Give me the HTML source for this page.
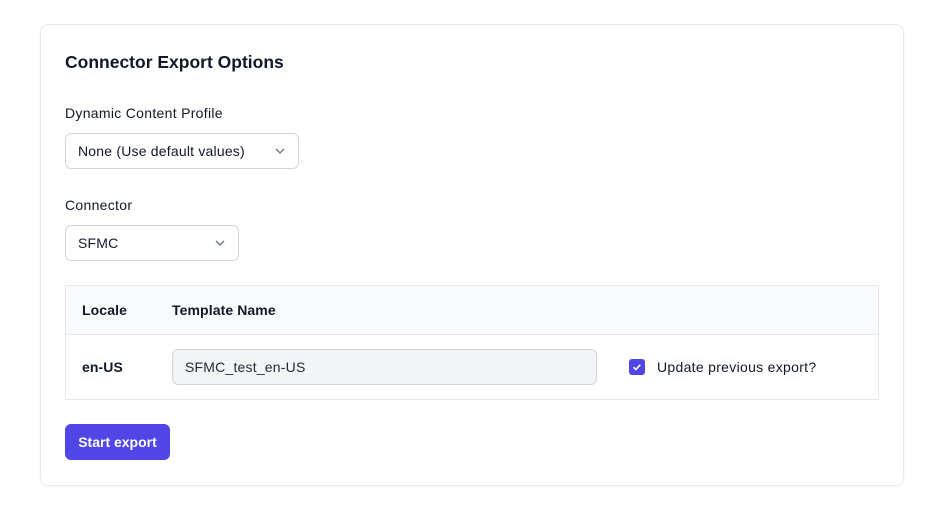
<!DOCTYPE html>
<html><head><meta charset="utf-8"><style>
*{box-sizing:border-box;margin:0;padding:0}
body{width:936px;height:523px;background:#fff;font-family:"Liberation Sans",sans-serif;color:#111827;position:relative;overflow:hidden}
.card{position:absolute;left:40px;top:24px;width:864px;height:462px;border:1px solid #e5e7eb;border-radius:8px;background:#fff;box-shadow:0 1px 2px rgba(0,0,0,.04)}
.abs{position:absolute}
h1{position:absolute;left:65px;top:52px;font-size:17.5px;font-weight:bold;color:#111827}
.lbl{font-size:14px;color:#111827;letter-spacing:.3px}
.sel{position:absolute;height:36px;border:1px solid #d1d5db;border-radius:6px;background:#fff;font-size:14px;padding:0 12px;line-height:34px;letter-spacing:.2px}
.sel svg{position:absolute;right:12px;top:13px}
.table{position:absolute;left:65px;top:285px;width:814px;height:115px;border:1px solid #e5e7eb}
.thead{position:absolute;left:0;top:0;width:100%;height:49px;background:#f9fafb;border-bottom:1px solid #e5e7eb}
.b{font-size:14px;font-weight:bold;letter-spacing:.1px}
.input{position:absolute;left:172px;top:349px;width:425px;height:36px;background:#f3f4f6;border:1px solid #d1d5db;border-radius:6px;font-size:14px;line-height:34px;padding-left:12px;color:#1f2937;letter-spacing:.2px}
.cb{position:absolute;left:629px;top:359px;width:16px;height:16px;background:#4f46e5;border-radius:3px}
.btn{position:absolute;left:65px;top:424px;width:105px;height:36px;background:#4f46e5;border-radius:6px;color:#fff;font-size:14px;font-weight:bold;text-align:center;line-height:36px}
</style></head><body>
<div class="card"></div>
<h1>Connector Export Options</h1>
<div class="abs lbl" style="left:65px;top:105px">Dynamic Content Profile</div>
<div class="sel" style="left:65px;top:133px;width:234px">None (Use default values)<svg width="12" height="8" viewBox="0 0 12 8"><path d="M2 2l4 4 4-4" fill="none" stroke="#6b7280" stroke-width="1.3"/></svg></div>
<div class="abs lbl" style="left:65px;top:197px">Connector</div>
<div class="sel" style="left:65px;top:225px;width:174px">SFMC<svg width="12" height="8" viewBox="0 0 12 8"><path d="M2 2l4 4 4-4" fill="none" stroke="#6b7280" stroke-width="1.3"/></svg></div>
<div class="table"><div class="thead"></div></div>
<div class="abs b" style="left:82px;top:302px">Locale</div>
<div class="abs b" style="left:172px;top:302px">Template Name</div>
<div class="abs b" style="left:82px;top:359px">en-US</div>
<div class="input">SFMC_test_en-US</div>
<div class="cb"><svg width="16" height="16" viewBox="0 0 16 16"><path d="M4.5 8.2l2.3 2.3 4.5-4.7" fill="none" stroke="#fff" stroke-width="1.6"/></svg></div>
<div class="abs lbl" style="left:657px;top:359px">Update previous export?</div>
<div class="btn">Start export</div>
</body></html>
